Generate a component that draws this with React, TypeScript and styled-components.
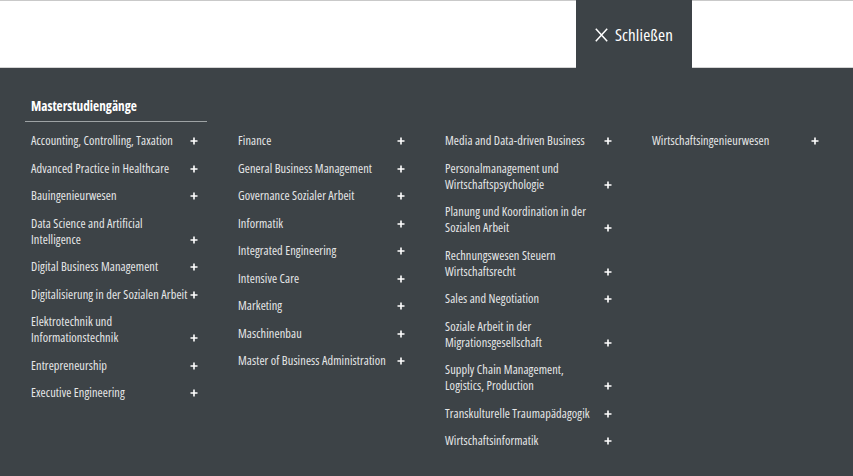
import React from "react";
import styled, { createGlobalStyle } from "styled-components";

const GlobalStyle = createGlobalStyle`
  html, body { margin: 0; padding: 0; }
  body {
    font-family: "Open Sans", "Liberation Sans", sans-serif;
    font-stretch: 75%;
    background: #ffffff;
  }
`;

const Page = styled.div`
  width: 853px;
  height: 476px;
  display: flex;
  flex-direction: column;
  overflow: hidden;
`;

const Header = styled.header`
  height: 68px;
  box-sizing: border-box;
  border-top: 1px solid #c9c9c9;
  border-bottom: 1px solid #d4d4d4;
  background: #ffffff;
  display: flex;
  justify-content: flex-end;
  padding-right: 161px;
  position: relative;
  z-index: 1;
`;

const CloseButton = styled.button`
  width: 116px;
  height: 69px;
  margin-top: -1px;
  border: none;
  background: #3d4347;
  color: #ffffff;
  display: flex;
  align-items: center;
  justify-content: center;
  gap: 7px;
  padding: 0 0 0 0;
  font-family: "Open Sans", "Liberation Sans", sans-serif;
  font-stretch: 75%;
  font-size: 17px;
  letter-spacing: 0.15px;
  cursor: pointer;
`;

const Panel = styled.main`
  flex: 1;
  background: #3d4347;
  padding: 30px 0 0 25px;
  box-sizing: border-box;
`;

const Grid = styled.div`
  display: grid;
  grid-template-columns: repeat(4, 182px);
  column-gap: 25px;
  align-items: start;
`;

const Heading = styled.h2`
  grid-column: 1 / 2;
  margin: 0 0 11px;
  padding: 0 0 7px 6px;
  font-size: 13.3px;
  line-height: 16px;
  font-weight: 700;
  color: #ffffff;
  border-bottom: 1px solid #9ea3a5;
`;

const Column = styled.ul`
  list-style: none;
  margin: 0;
  padding: 0;
  display: flex;
  flex-direction: column;
  gap: 11.5px;
`;

const Item = styled.li`
  display: flex;
  align-items: flex-end;
  padding-left: 6px;
  padding-right: 7px;
  font-size: 12.3px;
  letter-spacing: 0.1px;
  line-height: 16px;
  color: #e6e7e7;
`;

const Label = styled.span`
  flex: none;
  white-space: pre;
`;

const Plus = styled.span`
  width: 12px;
  flex: none;
  margin-left: auto;
  display: flex;
  justify-content: center;
  align-items: center;
  height: 16px;
`;

const PlusIcon = () => (
  <svg width="8" height="8" viewBox="0 0 8 8" aria-hidden="true">
    <path d="M4 0.5V7.5M0.5 4H7.5" stroke="#ffffff" strokeWidth="1.6" />
  </svg>
);

const CloseIcon = () => (
  <svg width="13" height="14" viewBox="0 0 13 14" aria-hidden="true">
    <path d="M0.8 0.8L12.2 13.2M12.2 0.8L0.8 13.2" stroke="#ffffff" strokeWidth="1.5" />
  </svg>
);

const columns: string[][] = [
  [
    "Accounting, Controlling, Taxation",
    "Advanced Practice in Healthcare",
    "Bauingenieurwesen",
    "Data Science and Artificial\nIntelligence",
    "Digital Business Management",
    "Digitalisierung in der Sozialen Arbeit",
    "Elektrotechnik und\nInformationstechnik",
    "Entrepreneurship",
    "Executive Engineering",
  ],
  [
    "Finance",
    "General Business Management",
    "Governance Sozialer Arbeit",
    "Informatik",
    "Integrated Engineering",
    "Intensive Care",
    "Marketing",
    "Maschinenbau",
    "Master of Business Administration",
  ],
  [
    "Media and Data-driven Business",
    "Personalmanagement und\nWirtschaftspsychologie",
    "Planung und Koordination in der\nSozialen Arbeit",
    "Rechnungswesen Steuern\nWirtschaftsrecht",
    "Sales and Negotiation",
    "Soziale Arbeit in der\nMigrationsgesellschaft",
    "Supply Chain Management,\nLogistics, Production",
    "Transkulturelle Traumapädagogik",
    "Wirtschaftsinformatik",
  ],
  ["Wirtschaftsingenieurwesen"],
];

export default function App() {
  return (
    <>
      <GlobalStyle />
      <Page>
        <Header>
          <CloseButton type="button">
            <CloseIcon />
            Schließen
          </CloseButton>
        </Header>
        <Panel>
          <Grid>
            <Heading>Masterstudiengänge</Heading>
            <div />
            <div />
            <div />
            {columns.map((col, i) => (
              <Column key={i}>
                {col.map((name) => (
                  <Item key={name}>
                    <Label>{name}</Label>
                    <Plus>
                      <PlusIcon />
                    </Plus>
                  </Item>
                ))}
              </Column>
            ))}
          </Grid>
        </Panel>
      </Page>
    </>
  );
}
